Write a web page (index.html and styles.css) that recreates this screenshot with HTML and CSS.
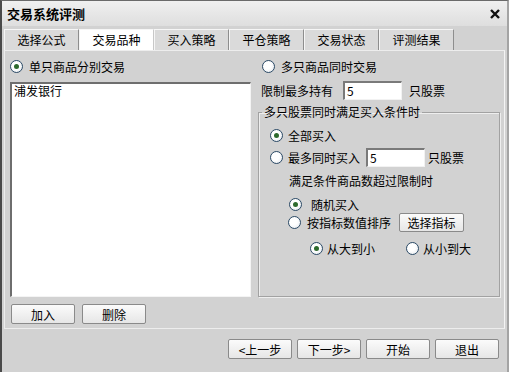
FILE: index.html
```html
<!DOCTYPE html>
<html lang="zh-CN">
<head>
  <meta charset="UTF-8" />
  <title>交易系统评测</title>
  <link rel="stylesheet" href="styles.css">
</head>
<body>
  <div class="window">
    <div class="titlebar">
      <span class="title">交易系统评测</span>
      <svg class="close" width="10" height="10" viewBox="0 0 10 10">
        <path d="M1 1 L9 9 M9 1 L1 9" stroke="#111" stroke-width="2.4" />
      </svg>
    </div>

    <div class="tabs">
      <div class="tab">选择公式</div>
      <div class="tab active">交易品种</div>
      <div class="tab">买入策略</div>
      <div class="tab">平仓策略</div>
      <div class="tab">交易状态</div>
      <div class="tab">评测结果</div>
    </div>

    <div class="panel">
      <!-- left: single stock -->
      <div class="col-left">
        <div class="row"><span class="radio on"></span><span class="gap6">单只商品分别交易</span></div>
        <div class="listbox">浦发银行</div>
        <div class="btn-row">
          <button class="btn">加入</button>
          <button class="btn">删除</button>
        </div>
      </div>

      <!-- right: multiple stocks -->
      <div class="col-right">
        <div class="row r-first"><span class="radio"></span><span class="gap6">多只商品同时交易</span></div>
        <div class="row r-limit">
          限制最多持有
          <span class="input in-limit">5</span>
          <span class="unit-a">只股票</span>
        </div>

        <fieldset class="group">
          <legend>多只股票同时满足买入条件时</legend>
          <div class="row g1"><span class="radio on"></span><span class="gap5">全部买入</span></div>
          <div class="row g2">
            <span class="radio"></span><span class="gap5">最多同时买入</span>
            <span class="input in-max">5</span>
            <span class="unit-b">只股票</span>
          </div>
          <div class="row g3">满足条件商品数超过限制时</div>
          <div class="row g4"><span class="radio on"></span><span class="gap9">随机买入</span></div>
          <div class="row g5">
            <span class="radio"></span><span class="gap6">按指标数值排序</span>
            <button class="btn btn-pick">选择指标</button>
          </div>
          <div class="row g6">
            <span class="radio on"></span><span class="gap4">从大到小</span>
            <span class="radio second"></span><span class="gap4">从小到大</span>
          </div>
        </fieldset>
      </div>
    </div>

    <div class="footer">
      <button class="btn">&lt;上一步</button>
      <button class="btn">下一步&gt;</button>
      <button class="btn">开始</button>
      <button class="btn">退出</button>
    </div>
  </div>
</body>
</html>
```

FILE: styles.css
```css
* {
  box-sizing: border-box;
}
body {
  margin: 0;
  font-family: "Noto Sans CJK SC", "Liberation Sans", sans-serif;
  font-size: 12px;
  color: #000;
  background: #d2d2d2;
}
.window {
  width: 509px;
  height: 372px;
  background: #d2d2d2;
  border-top: 1px solid #6a6a6a;
  border-left: 2px solid #4a4a4a;
  border-right: 2px solid #a4a4a4;
}
.titlebar {
  height: 25px;
  display: flex;
  align-items: center;
  justify-content: space-between;
  padding: 0 7px 0 5px;
  background: linear-gradient(#f0f0f0, #dedede);
}
.title {
  font-size: 13px;
  font-weight: bold;
}
.close {
  margin-top: 1px;
}
.tabs {
  display: flex;
  margin: 3px 0 0 2px;
  height: 21px;
}
.tab {
  width: 75px;
  height: 21px;
  line-height: 20px;
  text-align: center;
  background: #dadada;
  border-top: 1px solid #f6f6f6;
  border-left: 1px solid #f6f6f6;
  border-right: 1px solid #8e8e8e;
}
.tab.active {
  background: #fff;
  border-right-color: #c8c8c8;
}
.panel {
  display: flex;
  height: 279px;
  margin: 0 2px;
  padding: 7px 0 0 5px;
  border: 1px solid #ededed;
  border-right-color: #f4f4f4;
}
.col-left {
  width: 241px;
}
.col-right {
  width: 242px;
  margin-left: 7px;
}
.row {
  display: flex;
  align-items: center;
  height: 16px;
  white-space: nowrap;
}
.gap4 { margin-left: 4px; }
.gap5 { margin-left: 5px; }
.gap6 { margin-left: 6px; }
.gap9 { margin-left: 9px; }

.radio {
  flex: none;
  position: relative;
  width: 13px;
  height: 13px;
  border: 1px solid #2b4a66;
  border-radius: 50%;
  background: radial-gradient(circle at 40% 40%, #fff 40%, #dfe4ea 100%);
}
.radio.on::after {
  content: '';
  position: absolute;
  left: 3px;
  top: 3px;
  width: 5px;
  height: 5px;
  border-radius: 50%;
  background: #2d6a2d;
}
.listbox {
  margin-top: 8px;
  height: 215px;
  background: #fff;
  border-top: 2px solid #6e6e6e;
  border-left: 2px solid #6e6e6e;
  border-right: 1px solid #f4f4f4;
  border-bottom: 1px solid #f4f4f4;
  padding: 0 2px;
  line-height: 14px;
}
.btn-row {
  display: flex;
  gap: 7px;
  margin-top: 7px;
  padding-left: 1px;
}
.btn {
  width: 64px;
  height: 20px;
  padding: 0;
  font-family: inherit;
  font-size: 12px;
  color: #000;
  border: 1px solid #8a8a8a;
  border-radius: 2px;
  background: linear-gradient(#fbfbfb, #e6e6e6);
}
.r-first {
  padding-left: 4px;
}
.r-limit {
  margin-top: 7px;
  height: 19px;
  padding-left: 3px;
}
.input {
  display: inline-block;
  height: 19px;
  line-height: 16px;
  padding-left: 2px;
  background: #fff;
  border-top: 2px solid #7a7a7a;
  border-left: 2px solid #7a7a7a;
  border-right: 1px solid #f2f2f2;
  border-bottom: 1px solid #f2f2f2;
}
.in-limit {
  width: 59px;
  margin-left: 10px;
}
.unit-a {
  margin-left: 7px;
}
.group {
  margin: 4px 0 0;
  padding: 0;
  height: 193px;
  width: 242px;
  border: 1px solid #a2a2a2;
  box-shadow: 1px 1px 0 #eeeeee, inset 1px 1px 0 #eeeeee;
}
.group legend {
  margin-left: 3px;
  padding: 0 2px;
  line-height: 16px;
}
.g1 {
  margin: 7px 0 0 11px;
}
.g2 {
  margin: 5px 0 0 11px;
  height: 19px;
}
.in-max {
  width: 59px;
  margin-left: 6px;
}
.unit-b {
  margin-left: 3px;
}
.g3 {
  margin: 5px 0 0 30px;
}
.g4 {
  margin: 8px 0 0 30px;
}
.g5 {
  margin: 1px 0 0 29px;
  height: 19px;
}
.btn-pick {
  width: 65px;
  height: 19px;
  margin-left: 8px;
}
.g6 {
  margin: 8px 0 0 51px;
}
.radio.second {
  margin-left: 31px;
}
.footer {
  display: flex;
  justify-content: flex-end;
  gap: 5px;
  padding: 10px 8px 0 0;
}
.footer .btn {
  width: 64px;
  height: 20px;
}
```
